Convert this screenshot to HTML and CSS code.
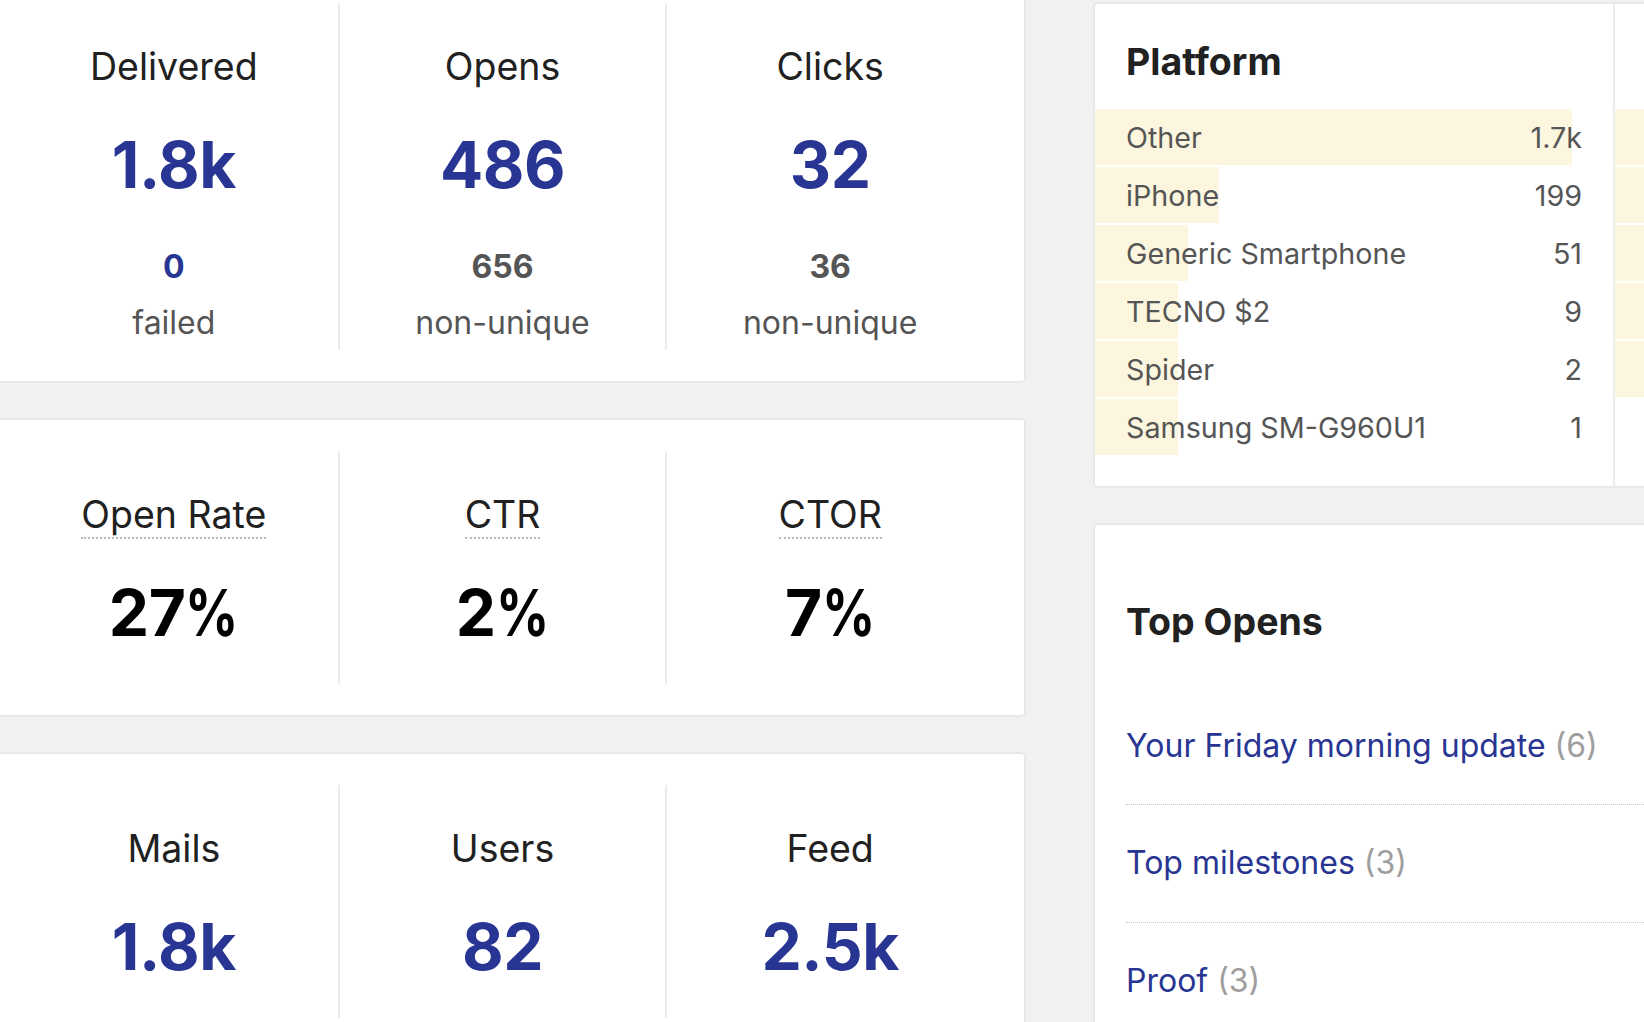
FILE: index.html
```html
<!DOCTYPE html>
<html lang="en">
<head>
<meta charset="utf-8">
<title>Campaign stats</title>
<link rel="stylesheet" href="styles.css">
</head>
<body>
<div class="layout">
  <main class="main-col">
    <section class="card">
      <div class="stats stats--sub">
        <div class="stat">
          <div class="stat-label">Delivered</div>
          <div class="stat-big">1.8k</div>
          <div class="stat-subnum stat-subnum--blue">0</div>
          <div class="stat-subtext">failed</div>
        </div>
        <div class="stat">
          <div class="stat-label">Opens</div>
          <div class="stat-big">486</div>
          <div class="stat-subnum">656</div>
          <div class="stat-subtext">non-unique</div>
        </div>
        <div class="stat">
          <div class="stat-label">Clicks</div>
          <div class="stat-big">32</div>
          <div class="stat-subnum">36</div>
          <div class="stat-subtext">non-unique</div>
        </div>
      </div>
    </section>

    <section class="card">
      <div class="stats">
        <div class="stat">
          <div class="stat-label"><span class="abbr">Open Rate</span></div>
          <div class="stat-big stat-big--black">27<span class="pct">%</span></div>
        </div>
        <div class="stat">
          <div class="stat-label"><span class="abbr">CTR</span></div>
          <div class="stat-big stat-big--black">2<span class="pct">%</span></div>
        </div>
        <div class="stat">
          <div class="stat-label"><span class="abbr">CTOR</span></div>
          <div class="stat-big stat-big--black">7<span class="pct">%</span></div>
        </div>
      </div>
    </section>

    <section class="card">
      <div class="stats">
        <div class="stat">
          <div class="stat-label">Mails</div>
          <div class="stat-big">1.8k</div>
        </div>
        <div class="stat">
          <div class="stat-label">Users</div>
          <div class="stat-big">82</div>
        </div>
        <div class="stat">
          <div class="stat-label">Feed</div>
          <div class="stat-big">2.5k</div>
        </div>
      </div>
    </section>
  </main>

  <aside class="side-col">
    <section class="card card--split">
      <div class="panel">
        <h2 class="panel-title">Platform</h2>
        <ul class="bars">
          <li class="bar-row"><span class="bar-fill" style="width:92.1%"></span><span class="bar-name">Other</span><span class="bar-val">1.7k</span></li>
          <li class="bar-row"><span class="bar-fill" style="width:23.9%"></span><span class="bar-name">iPhone</span><span class="bar-val">199</span></li>
          <li class="bar-row"><span class="bar-fill" style="width:18%"></span><span class="bar-name">Generic Smartphone</span><span class="bar-val">51</span></li>
          <li class="bar-row"><span class="bar-fill" style="width:16%"></span><span class="bar-name">TECNO $2</span><span class="bar-val">9</span></li>
          <li class="bar-row"><span class="bar-fill" style="width:16%"></span><span class="bar-name">Spider</span><span class="bar-val">2</span></li>
          <li class="bar-row"><span class="bar-fill" style="width:16%"></span><span class="bar-name">Samsung SM-G960U1</span><span class="bar-val">1</span></li>
        </ul>
      </div>
      <div class="panel">
        <div class="panel-title-spacer"></div>
        <ul class="bars">
          <li class="bar-row"><span class="bar-fill" style="width:92%"></span></li>
          <li class="bar-row"><span class="bar-fill" style="width:45%"></span></li>
          <li class="bar-row"><span class="bar-fill" style="width:24%"></span></li>
          <li class="bar-row"><span class="bar-fill" style="width:18%"></span></li>
          <li class="bar-row"><span class="bar-fill" style="width:16%"></span></li>
        </ul>
      </div>
    </section>

    <section class="card card--list">
      <h2 class="panel-title">Top Opens</h2>
      <ul class="top-list">
        <li class="top-item"><a class="top-link" href="#">Your Friday morning update</a> <span class="top-count">(6)</span></li>
        <li class="top-item"><a class="top-link" href="#">Top milestones</a> <span class="top-count">(3)</span></li>
        <li class="top-item"><a class="top-link" href="#">Proof</a> <span class="top-count">(3)</span></li>
      </ul>
    </section>
  </aside>
</div>
</body>
</html>
```

FILE: styles.css
```css
* { box-sizing: border-box; }

html, body {
  margin: 0;
  padding: 0;
  background: #f1f1f1;
  overflow: hidden;
  height: 100%;
}

body {
  font-family: "Inter", "Noto Sans", "Liberation Sans", sans-serif;
  color: #212121;
}

.layout {
  display: flex;
  align-items: flex-start;
  gap: 67px;
  margin-left: -23px;
}

.main-col {
  flex: 0 0 1049px;
  display: flex;
  flex-direction: column;
  gap: 35px;
  margin-top: -30px;
}

.side-col {
  flex: 0 0 1044px;
  display: flex;
  flex-direction: column;
  gap: 35px;
  margin-top: 2px;
}

.card {
  background: #fff;
  border: 2px solid #e8e8e8;
  border-radius: 5px;
  padding: 31px;
}

/* stat grid */
.stats {
  display: grid;
  grid-template-columns: repeat(3, 1fr);
}

.stat {
  text-align: center;
  padding: 40px 0 33px;
}

.stat + .stat {
  border-left: 2px solid #ececec;
}

.stats--sub .stat {
  padding-bottom: 3px;
}

.stat-label {
  font-size: 37.5px;
  line-height: 48px;
  color: #212121;
}

.abbr {
  border-bottom: 2px dotted #b8b8b8;
}

.stat-big {
  margin-top: 36px;
  font-size: 64px;
  line-height: 76px;
  font-weight: 700;
  color: #283593;
  letter-spacing: -0.5px;
}

.stat-big--black {
  color: #000;
}

.pct {
  display: inline-block;
  transform: scaleX(0.82);
  transform-origin: left center;
  margin-right: -11px;
}

.stat-subnum {
  margin-top: 40px;
  font-size: 32px;
  line-height: 48px;
  font-weight: 700;
  color: #555;
}

.stat-subnum--blue {
  color: #283593;
}

.stat-subtext {
  margin-top: 8px;
  font-size: 32px;
  line-height: 48px;
  color: #555;
}

/* split card with bar panels */
.card--split {
  display: grid;
  grid-template-columns: 518px 1fr;
  padding: 0;
}

.panel {
  padding: 31px 0;
}

.panel + .panel {
  border-left: 2px solid #ececec;
}

.panel-title {
  margin: 0;
  padding: 0 31px;
  font-size: 37.5px;
  line-height: 54px;
  font-weight: 700;
  color: #212121;
}

.panel-title-spacer {
  height: 54px;
}

.bars {
  list-style: none;
  margin: 20px 0 0;
  padding: 0;
  display: flex;
  flex-direction: column;
  gap: 2px;
}

.bar-row {
  position: relative;
  display: flex;
  align-items: center;
  justify-content: space-between;
  height: 56px;
  padding: 0 31px;
  font-size: 28.7px;
  color: #555;
}

.bar-fill {
  position: absolute;
  left: 0;
  top: 0;
  bottom: 0;
  background: #fdf6de;
}

.bar-name,
.bar-val {
  position: relative;
  white-space: nowrap;
}

/* top opens list */
.card--list {
  padding: 70px 31px 31px;
}

.card--list .panel-title {
  padding: 0;
}

.top-list {
  list-style: none;
  margin: 39px 0 0;
  padding: 0;
}

.top-item {
  padding: 39px 0;
  font-size: 32px;
  line-height: 38.4px;
  border-bottom: 1px dotted #c8c8c8;
  white-space: nowrap;
}

.top-link {
  color: #283593;
  text-decoration: none;
}

.top-count {
  color: #9e9e9e;
}
```
